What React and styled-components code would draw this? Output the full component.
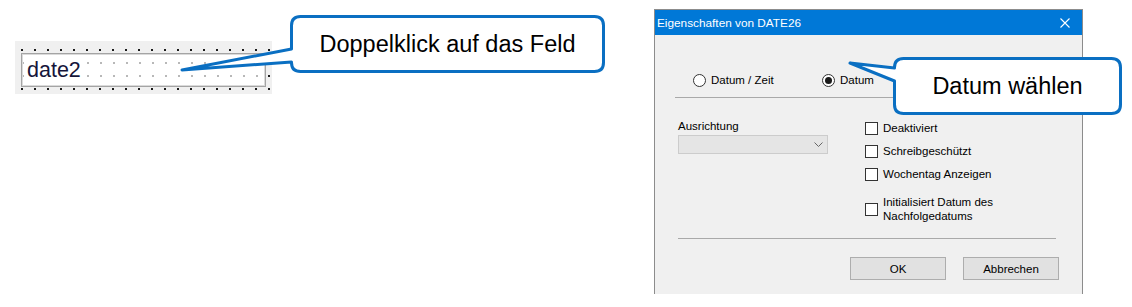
import React from 'react'
import styled, { createGlobalStyle } from 'styled-components'

const GlobalStyle = createGlobalStyle`
  html, body {
    margin: 0;
    padding: 0;
    background: #ffffff;
  }
  body {
    font-family: "Liberation Sans", Arial, sans-serif;
  }
`

const Page = styled.div`
  position: relative;
  width: 1132px;
  height: 307px;
  display: flex;
  align-items: flex-start;
  overflow: hidden;
`

/* ---------- form designer on the left ---------- */

const Designer = styled.div`
  margin: 41px 0 0 15px;
  width: 257px;
  height: 53px;
  box-sizing: border-box;
  padding: 12px 6px 0 6px;
  background-color: #f0f0f0;
  background-image: radial-gradient(circle at 1px 1px, #1a1a1a 0.9px, transparent 1.4px);
  background-size: 13px 13px;
  background-position: 6px 8px;
`

const Field = styled.div`
  width: 245px;
  height: 34px;
  box-sizing: border-box;
  border: 1px solid #a4a4a4;
  box-shadow: inset 0 0 0 1px #dadada;
  background-color: #ffffff;
  background-image: radial-gradient(circle at 1px 1px, #b8b8b8 0.8px, transparent 1.3px);
  background-size: 13px 13px;
  background-position: 0px 8px;
  display: flex;
  align-items: center;
  padding-left: 5px;
`

const FieldText = styled.span`
  font-size: 21.5px;
  color: #15153a;
  background: #ffffff;
  line-height: 24px;
`

/* ---------- properties dialog ---------- */

const Dialog = styled.div`
  margin: 9px 0 0 382px;
  width: 429px;
  height: 285px;
  box-sizing: border-box;
  border: 1px solid #8c8c8c;
  border-bottom: none;
  background: #f0f0f0;
  display: flex;
  flex-direction: column;
  font-size: 11.5px;
  color: #000;
`

const TitleBar = styled.div`
  height: 25px;
  background: #0078d7;
  color: #ffffff;
  display: flex;
  align-items: center;
  justify-content: space-between;
  padding: 0 12px 0 2px;
  font-size: 11.8px;
`

const CloseIcon = () => (
  <svg width="10" height="10" viewBox="0 0 10 10">
    <path d="M0.5 0.5 L9.5 9.5 M9.5 0.5 L0.5 9.5" stroke="#ffffff" strokeWidth="1.1" fill="none" />
  </svg>
)

const Body = styled.div`
  flex: 1;
  padding: 39px 26px 0 21px;
  display: flex;
  flex-direction: column;
`

const RadioRow = styled.div`
  display: flex;
  align-items: center;
  padding-left: 17px;
  height: 13px;
`

const RadioItem = styled.label`
  display: flex;
  align-items: center;
  gap: 5px;
  width: ${p => p.$w || 'auto'};
  line-height: 13px;
`

const RadioCircle = styled.span`
  width: 13px;
  height: 13px;
  box-sizing: border-box;
  border-radius: 50%;
  border: 1px solid #333333;
  background: #ffffff;
  display: flex;
  align-items: center;
  justify-content: center;
  &::after {
    content: '';
    display: ${p => (p.$checked ? 'block' : 'none')};
    width: 7px;
    height: 7px;
    border-radius: 50%;
    background: #1a1a1a;
  }
`

const Separator = styled.div`
  height: 1px;
  background: #a9a9a9;
  margin-top: ${p => p.$mt}px;
  margin-left: ${p => p.$ml || 0}px;
`

const Columns = styled.div`
  display: grid;
  grid-template-columns: 189px 1fr;
  margin-top: 21px;
`

const LeftCol = styled.div`
  display: flex;
  flex-direction: column;
  padding-left: 2px;
`

const FieldLabel = styled.div`
  line-height: 14px;
`

const Select = styled.div`
  margin-top: 2px;
  width: 150px;
  height: 19px;
  box-sizing: border-box;
  background: #e5e5e5;
  border: 1px solid #cccccc;
  display: flex;
  align-items: center;
  justify-content: flex-end;
  padding-right: 4px;
`

const Chevron = () => (
  <svg width="9" height="5" viewBox="0 0 9 5">
    <path d="M0.5 0.5 L4.5 4.5 L8.5 0.5" stroke="#666666" strokeWidth="1" fill="none" />
  </svg>
)

const RightCol = styled.div`
  display: flex;
  flex-direction: column;
  padding-top: 2px;
  gap: 9px;
`

const CheckRow = styled.label`
  display: flex;
  align-items: center;
  gap: 5px;
  min-height: 13px;
  line-height: 14px;
  margin-top: ${p => p.$mt || 0}px;
`

const CheckBox = styled.span`
  flex: none;
  width: 13px;
  height: 13px;
  box-sizing: border-box;
  border: 1px solid #333333;
  background: #ffffff;
`

const CheckText = styled.span`
  max-width: ${p => p.$max || 'none'};
`

const ButtonRow = styled.div`
  display: flex;
  justify-content: flex-end;
  gap: 17px;
  margin-top: 18px;
  margin-right: -3px;
`

const Button = styled.div`
  width: 96px;
  height: 23px;
  box-sizing: border-box;
  background: #e1e1e1;
  border: 1px solid #adadad;
  display: flex;
  align-items: center;
  justify-content: center;
`

/* ---------- callouts ---------- */

const CalloutWrap = styled.div`
  position: absolute;
  left: ${p => p.$x}px;
  top: ${p => p.$y}px;
  width: ${p => p.$w}px;
  height: ${p => p.$h}px;
  display: flex;
  align-items: center;
  justify-content: center;
`

const CalloutShape = styled.svg`
  position: absolute;
  left: 0;
  top: 0;
  overflow: visible;
`

const CalloutText = styled.span`
  position: relative;
  font-size: ${p => p.$size}px;
  color: #000;
  white-space: nowrap;
`

function Callout({ x, y, w, h, tip, ya, yb, size, children }) {
  // coordinates relative to the box, stroke centred on the outline
  const s = 1.5
  const r = 9
  const x0 = s, y0 = s, x1 = w - s, y1 = h - s
  const tx = tip[0] - x, ty = tip[1] - y
  const a = ya - y, b = yb - y
  const d = `M${x0 + r},${y0} H${x1 - r} Q${x1},${y0} ${x1},${y0 + r} V${y1 - r} Q${x1},${y1} ${x1 - r},${y1} H${x0 + r} Q${x0},${y1} ${x0},${y1 - r} V${b} L${tx},${ty} L${x0},${a} V${y0 + r} Q${x0},${y0} ${x0 + r},${y0} Z`
  return (
    <CalloutWrap $x={x} $y={y} $w={w} $h={h}>
      <CalloutShape width={w} height={h}>
        <path d={d} fill="#ffffff" stroke="#0a6fc2" strokeWidth="3" strokeLinejoin="round" />
      </CalloutShape>
      <CalloutText $size={size}>{children}</CalloutText>
    </CalloutWrap>
  )
}

export default function App() {
  return (
    <>
      <GlobalStyle />
      <Page>
        <Designer>
          <Field>
            <FieldText>date2</FieldText>
          </Field>
        </Designer>

        <Dialog>
          <TitleBar>
            <span>Eigenschaften von DATE26</span>
            <CloseIcon />
          </TitleBar>
          <Body>
            <RadioRow>
              <RadioItem $w="129px">
                <RadioCircle />
                <span>Datum / Zeit</span>
              </RadioItem>
              <RadioItem>
                <RadioCircle $checked />
                <span>Datum</span>
              </RadioItem>
            </RadioRow>
            <Separator $mt={10} $ml={-1} />
            <Columns>
              <LeftCol>
                <FieldLabel>Ausrichtung</FieldLabel>
                <Select>
                  <Chevron />
                </Select>
              </LeftCol>
              <RightCol>
                <CheckRow>
                  <CheckBox />
                  <CheckText>Deaktiviert</CheckText>
                </CheckRow>
                <CheckRow>
                  <CheckBox />
                  <CheckText>Schreibgeschützt</CheckText>
                </CheckRow>
                <CheckRow>
                  <CheckBox />
                  <CheckText>Wochentag Anzeigen</CheckText>
                </CheckRow>
                <CheckRow $mt={5}>
                  <CheckBox />
                  <CheckText $max="120px">Initialisiert Datum des Nachfolgedatums</CheckText>
                </CheckRow>
              </RightCol>
            </Columns>
            <Separator $mt={15} $ml={2} />
            <ButtonRow>
              <Button>OK</Button>
              <Button>Abbrechen</Button>
            </ButtonRow>
          </Body>
        </Dialog>

        <Callout x={290} y={15} w={315} h={58} tip={[182, 70]} ya={49} yb={62} size={23.5}>
          Doppelklick auf das Feld
        </Callout>
        <Callout x={893} y={57} w={229} h={58} tip={[850, 63]} ya={68} yb={81} size={23.5}>
          Datum wählen
        </Callout>
      </Page>
    </>
  )
}
